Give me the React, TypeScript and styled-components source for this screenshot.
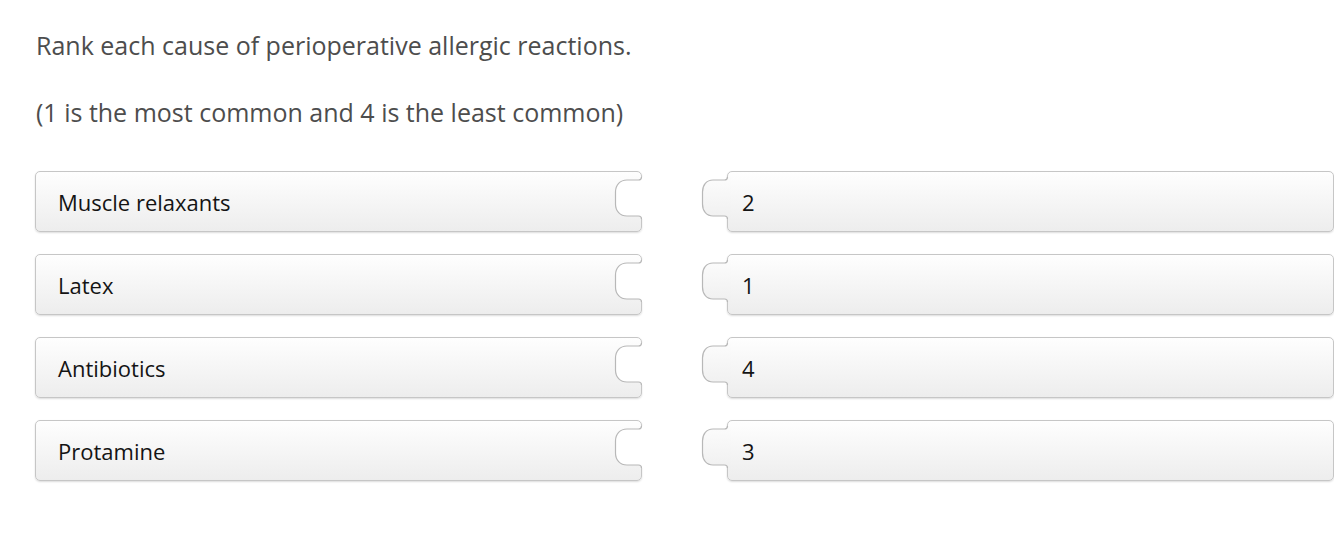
import styled, { createGlobalStyle } from "styled-components";

const GlobalStyle = createGlobalStyle`
  html, body {
    margin: 0;
    padding: 0;
    background: #ffffff;
  }
  body {
    font-family: "Open Sans", "Noto Sans", "Liberation Sans", sans-serif;
  }
`;

const items = [
  { cause: "Muscle relaxants", rank: "2" },
  { cause: "Latex", rank: "1" },
  { cause: "Antibiotics", rank: "4" },
  { cause: "Protamine", rank: "3" },
];

// C-shaped socket cut into the right edge of a cause piece
const socketPath =
  "M27.5 0 C27.5 2 26.5 3 24.5 3 H13 C6 3 1.5 8 1.5 15 V27 C1.5 34 6 39 13 39 H24.5 C26.5 39 27.5 40 27.5 42";

// matching knob sticking out of the left edge of a rank piece
const knobPath =
  "M26.5 0 C26.5 2 25.5 3 23.5 3 H12 C5.5 3 1.5 8 1.5 15 V27 C1.5 34 5.5 39 12 39 H23.5 C25.5 39 26.5 40 26.5 42";

function Socket() {
  return (
    <SocketSvg width="30" height="42" viewBox="0 0 30 42">
      <path d={`${socketPath} H30 V0 Z`} fill="#ffffff" />
      <path d={socketPath} fill="none" stroke="#b8b8b8" strokeWidth="1.2" />
    </SocketSvg>
  );
}

function Knob() {
  return (
    <KnobSvg width="30" height="42" viewBox="0 0 30 42">
      <defs>
        <linearGradient id="knobFill" x1="0" y1="0" x2="0" y2="1">
          <stop offset="0" stopColor="#fcfcfc" />
          <stop offset="1" stopColor="#f0f0f0" />
        </linearGradient>
      </defs>
      <path d={`${knobPath} H30 V0 Z`} fill="url(#knobFill)" />
      <path d={knobPath} fill="none" stroke="#b8b8b8" strokeWidth="1.2" />
    </KnobSvg>
  );
}

export default function App() {
  return (
    <>
      <GlobalStyle />
      <Page>
        <Prompt>Rank each cause of perioperative allergic reactions.</Prompt>
        <Hint>(1 is the most common and 4 is the least common)</Hint>
        <Board>
          {items.map((item) => (
            <Row key={item.cause}>
              <Piece $side="left">
                {item.cause}
                <Socket />
              </Piece>
              <Piece $side="right">
                <Knob />
                {item.rank}
              </Piece>
            </Row>
          ))}
        </Board>
      </Page>
    </>
  );
}

const Page = styled.main`
  padding: 28px 0 0 36px;
  box-sizing: border-box;
  width: 1334px;
  height: 543px;
`;

const Prompt = styled.p`
  margin: 0;
  font-size: 25px;
  line-height: 34px;
  color: #4d4d4d;
`;

const Hint = styled(Prompt)`
  margin-top: 33px;
`;

const Board = styled.div`
  display: flex;
  flex-direction: column;
  gap: 22px;
  margin: 42px 0 0 -1px;
`;

const Row = styled.div`
  display: grid;
  grid-template-columns: 607px 607px;
  column-gap: 85px;
`;

const Piece = styled.div<{ $side: "left" | "right" }>`
  position: relative;
  box-sizing: border-box;
  height: 61px;
  display: flex;
  align-items: center;
  padding-left: ${(p) => (p.$side === "left" ? "22px" : "14px")};
  border: 1px solid #c6c6c6;
  border-radius: 5px;
  background: linear-gradient(#fefefe, #ededed);
  box-shadow: 0 1px 2px rgba(0, 0, 0, 0.14);
  font-size: 22px;
  color: #141414;
`;

const SocketSvg = styled.svg`
  position: absolute;
  right: -3px;
  top: 5px;
  display: block;
`;

const KnobSvg = styled.svg`
  position: absolute;
  left: -27px;
  top: 5px;
  display: block;
`;
